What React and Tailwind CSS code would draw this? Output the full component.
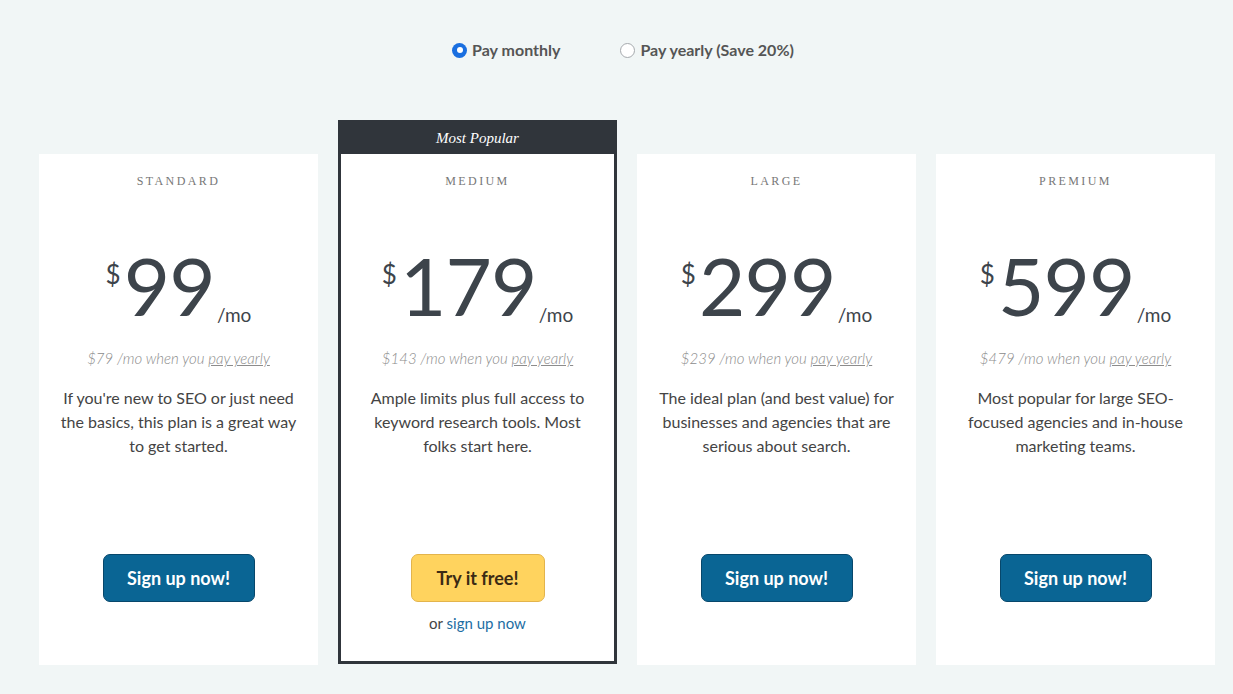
import React, { useState } from 'react';

const plans = [
  {
    name: 'STANDARD',
    price: '99',
    yearly: '$79',
    desc: "If you're new to SEO or just need the basics, this plan is a great way to get started.",
  },
  {
    name: 'MEDIUM',
    price: '179',
    yearly: '$143',
    desc: 'Ample limits plus full access to keyword research tools. Most folks start here.',
    popular: true,
  },
  {
    name: 'LARGE',
    price: '299',
    yearly: '$239',
    desc: 'The ideal plan (and best value) for businesses and agencies that are serious about search.',
  },
  {
    name: 'PREMIUM',
    price: '599',
    yearly: '$479',
    desc: 'Most popular for large SEO-focused agencies and in-house marketing teams.',
  },
];

// Radio dot used in the billing toggle
const Radio = ({ checked }) =>
  checked ? (
    <span className="flex h-[15px] w-[15px] items-center justify-center rounded-full bg-[#1a6fe0]">
      <span className="h-[6px] w-[6px] rounded-full bg-white" />
    </span>
  ) : (
    <span className="h-[15px] w-[15px] rounded-full border border-[#a5a9ad] bg-white" />
  );

const PlanBody = ({ plan }) => (
  <div className="flex flex-col items-center pt-[19px]">
    <div className="font-['Liberation_Serif',serif] text-[12px] leading-[16px] tracking-[0.2em] text-[#777]">
      {plan.name}
    </div>

    {/* Price */}
    <div className="mt-[56px] flex h-[80px] justify-center leading-none text-[#3d444b]">
      <span className="mt-[16px] mr-[3px] text-[26px]">$</span>
      <span className="text-[80px] tracking-[-0.01em]">{plan.price}</span>
      <span className="ml-[2px] self-end mb-[1px] text-[19px]">/mo</span>
    </div>

    <div className="mt-[23px] text-[15px] font-light italic leading-[20px] text-[#8c8c8c]">
      {plan.yearly} /mo when you <span className="underline">pay yearly</span>
    </div>

    <p className="mt-[18px] h-[168px] px-5 text-center text-[16px] leading-[24px] text-[#444]">
      {plan.desc}
    </p>

    {plan.popular ? (
      <>
        <button className="h-[48px] w-[134px] rounded-[7px] border border-[#e3b44c] bg-[#ffd35e] text-[18px] font-bold text-[#3b2a14]">
          Try it free!
        </button>
        <div className="mt-[11px] text-[15px] leading-[20px] text-[#444]">
          or <a className="text-[#1d6ea3]">sign up now</a>
        </div>
      </>
    ) : (
      <button className="h-[48px] w-[152px] rounded-[7px] border border-[#07476b] bg-[#0a6594] text-[18px] font-bold text-white">
        Sign up now!
      </button>
    )}
  </div>
);

export default function App() {
  const [billing, setBilling] = useState('monthly');

  return (
    <div className="min-h-[694px] bg-[#f1f6f6] pl-[39px] pr-[18px] font-['Lato',sans-serif]">
      {/* Billing toggle */}
      <div className="flex justify-center gap-[60px] pr-[8px] pt-[40px]">
        <label className="flex cursor-pointer items-center gap-[5px] text-[16px] font-bold leading-[20px] text-[#555]" onClick={() => setBilling('monthly')}>
          <Radio checked={billing === 'monthly'} />
          Pay monthly
        </label>
        <label className="flex cursor-pointer items-center gap-[5px] text-[16px] font-bold leading-[20px] text-[#555]" onClick={() => setBilling('yearly')}>
          <Radio checked={billing === 'yearly'} />
          Pay yearly (Save 20%)
        </label>
      </div>

      {/* Plan cards */}
      <div className="mt-[60px] flex items-start gap-[20px]">
        {plans.map((plan) =>
          plan.popular ? (
            <div key={plan.name} className="w-[279px] border-[3px] border-[#30353b] bg-[#30353b]">
              <div className="flex h-[31px] items-center justify-center font-['Liberation_Serif',serif] text-[15px] italic text-white">
                Most Popular
              </div>
              <div className="h-[507px] bg-white">
                <PlanBody plan={plan} />
              </div>
            </div>
          ) : (
            <div key={plan.name} className="mt-[34px] h-[511px] w-[279px] bg-white">
              <PlanBody plan={plan} />
            </div>
          )
        )}
      </div>
    </div>
  );
}
